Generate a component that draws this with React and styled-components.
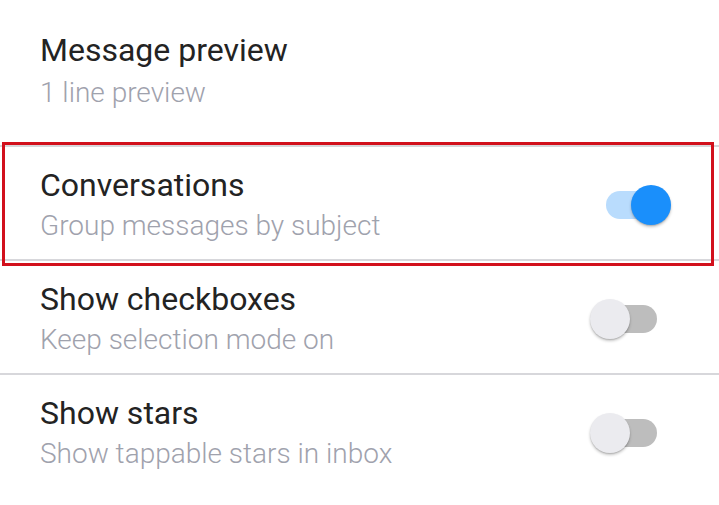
import React, { useState } from "react";
import styled, { createGlobalStyle } from "styled-components";

const GlobalStyle = createGlobalStyle`
  html, body {
    margin: 0;
    padding: 0;
    background: #ffffff;
  }
  body {
    font-family: Roboto, "Noto Sans", "Liberation Sans", sans-serif;
    -webkit-font-smoothing: antialiased;
  }
`;

const List = styled.div`
  display: flex;
  flex-direction: column;
  width: 719px;
  background: #ffffff;
`;

const Row = styled.div`
  position: relative;
  display: flex;
  align-items: center;
  justify-content: space-between;
  padding: ${(p) => (p.$first ? "31px 0 35px 40px" : "19px 0 16px 40px")};
  border-bottom: ${(p) => (p.$last ? "none" : "2px solid #d7d7db")};
`;

const TextBlock = styled.div`
  display: flex;
  flex-direction: column;
`;

const Title = styled.div`
  font-size: 32px;
  line-height: 38px;
  font-weight: 400;
  color: #232323;
  white-space: nowrap;
`;

const Subtitle = styled.div`
  margin-top: ${(p) => (p.$first ? "7px" : "5px")};
  font-size: 28px;
  line-height: 34px;
  font-weight: 300;
  color: #9fa2ad;
  white-space: nowrap;
`;

const Highlight = styled.div`
  position: absolute;
  top: -5px;
  bottom: -7px;
  left: 2px;
  right: 5px;
  border: 3px solid #d2101c;
  pointer-events: none;
`;

const SwitchBox = styled.button`
  position: relative;
  display: flex;
  align-items: center;
  width: 82px;
  height: 42px;
  margin-right: 47px;
  padding: 0 15px 0 16px;
  border: none;
  background: transparent;
  cursor: pointer;
`;

const Track = styled.span`
  flex: 1;
  height: 28px;
  border-radius: 14px;
  background: ${(p) => (p.$on ? "#b9dcfd" : "#bdbdbd")};
`;

const Knob = styled.span`
  position: absolute;
  top: 1px;
  left: ${(p) => (p.$on ? "41px" : "0px")};
  width: 40px;
  height: 40px;
  border-radius: 50%;
  background: ${(p) => (p.$on ? "#1a8ffb" : "#ebebef")};
  box-shadow: 0 2px 3px rgba(0, 0, 0, 0.22), 0 1px 1px rgba(0, 0, 0, 0.12);
`;

function Switch({ on, onToggle }) {
  return (
    <SwitchBox onClick={onToggle} aria-pressed={on}>
      <Track $on={on} />
      <Knob $on={on} />
    </SwitchBox>
  );
}

const settings = [
  { key: "preview", title: "Message preview", sub: "1 line preview", toggle: false },
  { key: "conv", title: "Conversations", sub: "Group messages by subject", toggle: true, highlight: true },
  { key: "check", title: "Show checkboxes", sub: "Keep selection mode on", toggle: true },
  { key: "stars", title: "Show stars", sub: "Show tappable stars in inbox", toggle: true },
];

export default function App() {
  const [values, setValues] = useState({ conv: true, check: false, stars: false });

  return (
    <>
      <GlobalStyle />
      <List>
        {settings.map((s, i) => (
          <Row key={s.key} $first={i === 0} $last={i === settings.length - 1}>
            <TextBlock>
              <Title>{s.title}</Title>
              <Subtitle $first={i === 0}>{s.sub}</Subtitle>
            </TextBlock>
            {s.toggle && (
              <Switch
                on={values[s.key]}
                onToggle={() => setValues({ ...values, [s.key]: !values[s.key] })}
              />
            )}
            {s.highlight && <Highlight />}
          </Row>
        ))}
      </List>
    </>
  );
}
